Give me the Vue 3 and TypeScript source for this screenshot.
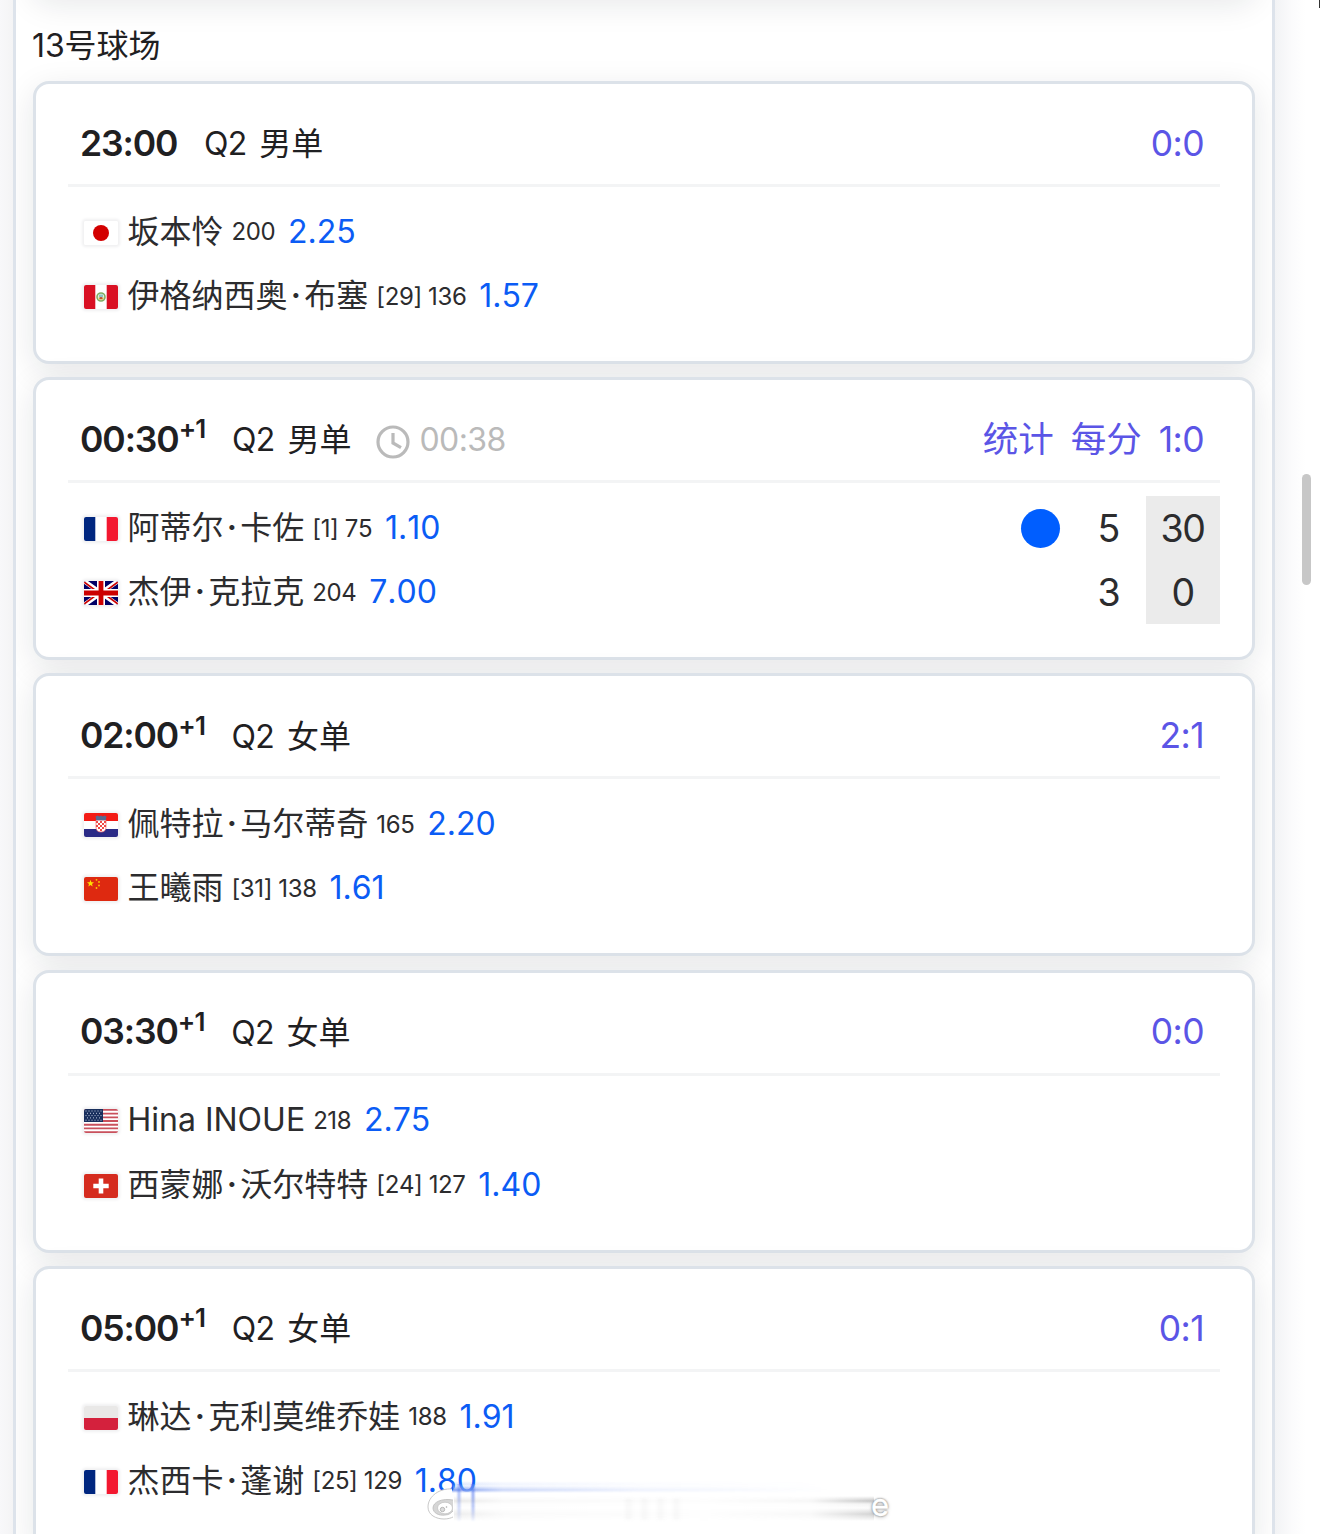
<script setup lang="ts">
type Flag = 'jp' | 'pe' | 'fr' | 'gb' | 'hr' | 'cn' | 'us' | 'ch' | 'pl'

interface Player {
  flag: Flag
  name: string
  rank: string
  odds: string
  serving?: boolean
  games?: string
  points?: string
}

interface Match {
  time: string
  nextDay: boolean
  round: string
  event: string
  elapsed?: string
  links: string[]
  h2h: string
  players: Player[]
}

const matches: Match[] = [
  {
    time: '23:00', nextDay: false, round: 'Q2', event: '男单', links: [], h2h: '0:0',
    players: [
      { flag: 'jp', name: '坂本怜', rank: '200', odds: '2.25' },
      { flag: 'pe', name: '伊格纳西奥·布塞', rank: '[29] 136', odds: '1.57' },
    ],
  },
  {
    time: '00:30', nextDay: true, round: 'Q2', event: '男单', elapsed: '00:38', links: ['统计', '每分'], h2h: '1:0',
    players: [
      { flag: 'fr', name: '阿蒂尔·卡佐', rank: '[1] 75', odds: '1.10', serving: true, games: '5', points: '30' },
      { flag: 'gb', name: '杰伊·克拉克', rank: '204', odds: '7.00', games: '3', points: '0' },
    ],
  },
  {
    time: '02:00', nextDay: true, round: 'Q2', event: '女单', links: [], h2h: '2:1',
    players: [
      { flag: 'hr', name: '佩特拉·马尔蒂奇', rank: '165', odds: '2.20' },
      { flag: 'cn', name: '王曦雨', rank: '[31] 138', odds: '1.61' },
    ],
  },
  {
    time: '03:30', nextDay: true, round: 'Q2', event: '女单', links: [], h2h: '0:0',
    players: [
      { flag: 'us', name: 'Hina INOUE', rank: '218', odds: '2.75' },
      { flag: 'ch', name: '西蒙娜·沃尔特特', rank: '[24] 127', odds: '1.40' },
    ],
  },
  {
    time: '05:00', nextDay: true, round: 'Q2', event: '女单', links: [], h2h: '0:1',
    players: [
      { flag: 'pl', name: '琳达·克利莫维乔娃', rank: '188', odds: '1.91' },
      { flag: 'fr', name: '杰西卡·蓬谢', rank: '[25] 129', odds: '1.80' },
    ],
  },
]

const nameParts = (name: string): string[] => name.split(/(·)/)
</script>

<template>
  <main class="screen">
    <section class="panel">
      <div class="card previous"></div>
      <h2 class="court">13号球场</h2>
      <div class="list">
        <article v-for="m in matches" :key="m.time" class="card">
          <header class="head">
            <b class="time">{{ m.time }}</b><b v-if="m.nextDay" class="plus">+1</b>
            <span class="round">{{ m.round }}</span>
            <span class="event">{{ m.event }}</span>
            <span v-if="m.elapsed" class="elapsed">
              <svg viewBox="0 0 34 34" width="34" height="34" fill="none" stroke="#bababa" stroke-width="3.2">
                <circle cx="17" cy="17" r="15" />
                <path d="M17 8v10l8 4.600" />
              </svg>
              <span class="clock">{{ m.elapsed }}</span>
            </span>
            <span class="links">
              <a v-for="l in m.links" :key="l" class="link">{{ l }}</a>
              <a class="h2h">{{ m.h2h }}</a>
            </span>
          </header>
          <div class="rows">
            <div v-for="p in m.players" :key="p.name" class="row">
              <span class="flag" :class="p.flag">
                <svg viewBox="0 0 34 24" width="34" height="24">
                  <template v-if="p.flag === 'jp'">
                    <rect width="34" height="24" fill="#fff" /><circle cx="17" cy="12" r="8" fill="#d30000" />
                  </template>
                  <template v-else-if="p.flag === 'pe'">
                    <rect width="34" height="24" fill="#fff" />
                    <path d="M0 0h11.3v24H0zM22.7 0H34v24H22.7z" fill="#d91023" />
                    <circle cx="17" cy="12" r="4" fill="#e6eedc" stroke="#7fae62" stroke-width="1.6" />
                    <path d="M15 9.500h4v3h-4z" fill="#8cc7c9" /><path d="M14.800 12.600h4.600v2h-4.600z" fill="#d8a13a" />
                    <circle cx="17" cy="13" r="1" fill="#b93b2b" />
                  </template>
                  <template v-else-if="p.flag === 'fr'">
                    <rect width="34" height="24" fill="#fff" />
                    <path d="M0 0h11.3v24H0z" fill="#00267f" /><path d="M22.7 0H34v24H22.7z" fill="#f31830" />
                  </template>
                  <template v-else-if="p.flag === 'gb'">
                    <rect width="34" height="24" fill="#006" />
                    <path d="M0 0l34 24M34 0L0 24" stroke="#fff" stroke-width="4.6" />
                    <path d="M0 1l15 11M34 1L19 12M0 23l15-11M34 23L19 12" stroke="#c00" stroke-width="1.6" />
                    <path d="M17 0v24M0 12h34" stroke="#fff" stroke-width="8" />
                    <path d="M17 0v24M0 12h34" stroke="#c00" stroke-width="4.8" />
                  </template>
                  <template v-else-if="p.flag === 'hr'">
                    <rect width="34" height="24" fill="#fff" />
                    <path d="M0 0h34v8H0z" fill="#f31a14" /><path d="M0 16h34v8H0z" fill="#2a2a86" />
                    <path d="M12 7h10v7q0 5-5 5t-5-5z" fill="#fff" />
                    <path d="M12 7h10v7q0 5-5 5t-5-5z" fill="none" stroke="#f3686a" stroke-width=".7" />
                    <path d="M12 8h2v2h-2zM16 8h2v2h-2zM20 8h2v2h-2zM14 10h2v2h-2zM18 10h2v2h-2zM12 12h2v2h-2zM16 12h2v2h-2zM20 12h2v2h-2zM14 14h2v2h-2zM18 14h2v2h-2zM16 16h2v2h-2z" fill="#f04a48" />
                    <path d="M11.5 3.600l2.400-1 1.200 1L17 2.400l1.900 1.200 1.200-1 2.400 1-.7 3.600h-9.600z" fill="#57688f" />
                  </template>
                  <template v-else-if="p.flag === 'cn'">
                    <rect width="34" height="24" fill="#de2910" />
                    <path d="M6.5 2.800l.9 2.500h2.600L8 7l.7 2.600-2.200-1.500-2.200 1.500L5 7 3 5.300h2.600z" fill="#ffde00" />
                    <circle cx="12.500" cy="2.800" r=".9" fill="#ffc400" /><circle cx="15" cy="5" r=".9" fill="#ffc400" />
                    <circle cx="15" cy="8.500" r=".9" fill="#ffc400" /><circle cx="12.500" cy="11" r=".9" fill="#ffc400" />
                  </template>
                  <template v-else-if="p.flag === 'us'">
                    <rect width="34" height="24" fill="#fff" />
                    <path d="M0 .92h34M0 4.620h34M0 8.310h34M0 12h34M0 15.700h34M0 19.400h34M0 23.080h34" stroke="#c9505c" stroke-width="1.850" />
                    <path d="M0 0h19v13H0z" fill="#192f5d" />
                    <path d="M1.500 2h17M3 4.300h15M1.500 6.600h17M3 8.900h15M1.500 11.200h17" stroke="#c3cde0" stroke-width="1" stroke-dasharray="1 2" />
                  </template>
                  <template v-else-if="p.flag === 'ch'">
                    <rect width="34" height="24" fill="#d52b1e" />
                    <path d="M14.700 4.500h4.600v5.200h5.400v4.600h-5.400v5.200h-4.600v-5.200H9.300V9.700h5.400z" fill="#fff" />
                  </template>
                  <template v-else>
                    <rect width="34" height="12" fill="#e9e8e7" /><rect y="12" width="34" height="12" fill="#d4213d" />
                  </template>
                </svg>
              </span>
              <span class="name"><span v-for="(part, i) in nameParts(p.name)" :key="i" :class="{ dot: part === '·' }">{{ part }}</span></span>
              <span class="rank">{{ p.rank }}</span>
              <span class="odds">{{ p.odds }}</span>
              <span v-if="p.points" class="score">
                <i v-if="p.serving" class="ball"></i>
                <span class="games">{{ p.games }}</span>
                <span class="points">{{ p.points }}</span>
              </span>
            </div>
          </div>
        </article>
      </div>
    </section>
    <i class="scrollbar"></i>
    <i class="tick"></i>
    <div class="mark">
      <i class="streak vertical"></i>
      <i class="streak wide"></i>
      <i class="streak grey"></i>
      <i class="streak bars"></i>
      <svg class="eye" viewBox="0 0 30 34" width="30" height="34">
        <path d="M26 2C14 1 2 9 2 20c0 8 8 12 16 12 4 0 7-1 9-2" fill="#fff" stroke="#c9c9c9" stroke-width="1" />
        <path d="M27 13C16 11 7 15 7 21c0 5 6 8 12 7 4 0 6-2 8-4" fill="#d6d6d6" stroke="#bbb" stroke-width=".8" />
        <ellipse cx="19" cy="21" rx="7.500" ry="5.800" fill="#fff" stroke="#c2c2c2" stroke-width=".7" />
        <circle cx="16.500" cy="22.500" r="2.200" fill="#ddd" stroke="#aaa" stroke-width=".8" />
        <circle cx="20.500" cy="20" r=".8" fill="#aaa" />
      </svg>
      <span class="letter">e</span>
    </div>
  </main>
</template>

<style>
html,
body {
  overflow: hidden;
}
</style>

<style scoped>
.screen {
  position: relative;
  box-sizing: border-box;
  width: 1320px;
  height: 1534px;
  overflow: hidden;
  padding: 0 45px 0 13px;
  background: linear-gradient(to right, #f8f8fa 0, #f4f4f5 13px, #f2f3f5 1275px, #fbfbfc 1292px, #fff 1306px);
  font-family: Inter, 'Noto Sans CJK SC', sans-serif;
  font-weight: 370;
  color: #1f2022;
}
.panel {
  box-sizing: border-box;
  height: 1534px;
  overflow: hidden;
  border: solid #dde3eb;
  border-width: 0 3px;
  padding: 0 17px;
  background: #fff;
}
.card {
  box-sizing: border-box;
  height: 283px;
  border: 3px solid #dce2e9;
  border-radius: 16px;
  padding: 0 32px;
  background: #fff;
  box-shadow: 0 8px 32px rgba(20, 26, 40, 0.1);
}
.previous {
  margin: -287px 0 -11px;
}
.court {
  box-sizing: border-box;
  height: 96px;
  margin: 0 0 0 -1px;
  padding-top: 37px;
  line-height: 48px;
  font-size: 32px;
  font-weight: 370;
  letter-spacing: -0.1px;
}
.list {
  display: flex;
  flex-direction: column;
  gap: 13.2px;
}
.head {
  box-sizing: border-box;
  display: flex;
  align-items: center;
  height: 103px;
  padding: 19.5px 16px 0 12px;
  border-bottom: 3px solid #f3f4f5;
  line-height: 48px;
  white-space: nowrap;
}
.time {
  font-size: 35.5px;
  font-weight: 600;
  letter-spacing: -1.1px;
}
.plus {
  margin-top: -21px;
  font-size: 26px;
  font-weight: 600;
  letter-spacing: -0.8px;
}
.round {
  margin: 1px 0 0 26.5px;
  font-size: 32px;
  letter-spacing: -0.7px;
}
.event {
  margin: 1px 0 0 12.8px;
  font-size: 32px;
}
.elapsed {
  display: flex;
  align-items: center;
  margin: 1px 0 0 25px;
  color: #bababa;
}
.elapsed svg {
  margin-top: 3px;
}
.clock {
  margin-left: 9px;
  font-size: 32px;
  letter-spacing: -0.6px;
}
.links {
  display: flex;
  gap: 17px;
  margin-left: auto;
  font-size: 35.5px;
  color: #5b55e6;
}
.h2h {
  font-kerning: none;
  letter-spacing: -0.6px;
}
.rows {
  padding-top: 12.8px;
}
.row {
  display: flex;
  align-items: center;
  height: 64.2px;
  padding-left: 14px;
  line-height: 48px;
  white-space: nowrap;
  color: #2c2c2e;
}
.flag {
  display: block;
  flex: none;
  width: 34px;
  height: 24px;
  margin: 2px 9.5px 0 2px;
  border-radius: 2px;
  box-shadow: 0 0 3px 2px #f0f0f1;
}
.flag svg {
  display: block;
  border-radius: 2px;
}
.name {
  font-size: 32px;
}
.name .dot {
  display: inline-block;
  width: 16.8px;
  font-weight: 600;
  text-align: center;
}
.rank {
  margin: 1px 0 0 8px;
  font-size: 24px;
  font-kerning: none;
  letter-spacing: -0.4px;
}
.odds {
  margin-left: 12.8px;
  font-size: 32px;
  font-kerning: none;
  letter-spacing: 0;
  color: #0b5cf5;
}
.score {
  display: flex;
  align-items: center;
  align-self: stretch;
  margin-left: auto;
  font-size: 37.5px;
  font-weight: 400;
}
.ball {
  width: 39px;
  height: 39px;
  border-radius: 50%;
  background: #005eff;
}
.games {
  width: 74px;
  margin: 2px 0 0 12.5px;
  text-align: center;
}
.points {
  box-sizing: border-box;
  width: 74px;
  height: 100%;
  padding-right: 1px;
  line-height: 66px;
  letter-spacing: -1.5px;
  text-align: center;
  background: #ebebeb;
}
.scrollbar {
  position: absolute;
  left: 1302px;
  top: 474px;
  width: 9px;
  height: 111px;
  border-radius: 5px;
  background: #c7c7c7;
}
.tick {
  position: absolute;
  right: 0;
  top: 0;
  width: 1px;
  height: 8px;
  background: #333;
}
/* Smeared watermark lying over the last row */
.mark {
  position: absolute;
  left: 426px;
  top: 1478px;
  width: 470px;
  height: 56px;
}
.streak {
  position: absolute;
}
.vertical {
  left: 27px;
  top: 6px;
  width: 26px;
  height: 38px;
  background:
    linear-gradient(to right, transparent 3px, rgba(90, 125, 240, 0.45) 6px, transparent 9px, transparent 17px, rgba(90, 125, 240, 0.6) 20px, transparent 23px),
    linear-gradient(to bottom, rgba(255, 255, 255, 0), #fff 10px);
  -webkit-mask-image: linear-gradient(to bottom, #000 60%, transparent);
  mask-image: linear-gradient(to bottom, #000 60%, transparent);
}
.wide {
  left: 26px;
  top: 3px;
  width: 420px;
  height: 16px;
  background: linear-gradient(to bottom, transparent, rgba(80, 130, 245, 0.2) 3px, rgba(80, 130, 245, 0.12) 5px, rgba(40, 90, 230, 0.6) 9px, transparent 12px);
  -webkit-mask-image: linear-gradient(to right, #000, rgba(0, 0, 0, 0.4) 12%, rgba(0, 0, 0, 0.12) 45%, transparent 90%);
  mask-image: linear-gradient(to right, #000, rgba(0, 0, 0, 0.4) 12%, rgba(0, 0, 0, 0.12) 45%, transparent 90%);
}
.grey {
  left: 28px;
  top: 18px;
  width: 420px;
  height: 25px;
  background: linear-gradient(to bottom, transparent, #c4c4c4 5px, #f2f2f2 8px, #fcfcfc 12px, #d2d2d2 18px, transparent);
  -webkit-mask-image: linear-gradient(to right, rgba(0, 0, 0, 0.4), rgba(0, 0, 0, 0.1) 12%, rgba(0, 0, 0, 0.03) 60%, rgba(0, 0, 0, 0.15) 85%, #000);
  mask-image: linear-gradient(to right, rgba(0, 0, 0, 0.4), rgba(0, 0, 0, 0.1) 12%, rgba(0, 0, 0, 0.03) 60%, rgba(0, 0, 0, 0.15) 85%, #000);
}
.bars {
  left: 199px;
  top: 20px;
  width: 58px;
  height: 22px;
  background: repeating-linear-gradient(to right, rgba(130, 130, 130, 0.04) 0, rgba(130, 130, 130, 0.04) 6px, transparent 8px, transparent 16px);
  filter: blur(1.5px);
}
.eye {
  position: absolute;
  left: 0;
  top: 9px;
}
.letter {
  position: absolute;
  left: 445px;
  top: 11px;
  line-height: 32px;
  font-size: 31px;
  font-weight: 400;
  color: #fff;
  -webkit-text-stroke: 0.5px #fff;
  text-shadow: 0 0 2px #777, 0 0 2px #999, 0 1px 4px #bbb;
}
</style>
